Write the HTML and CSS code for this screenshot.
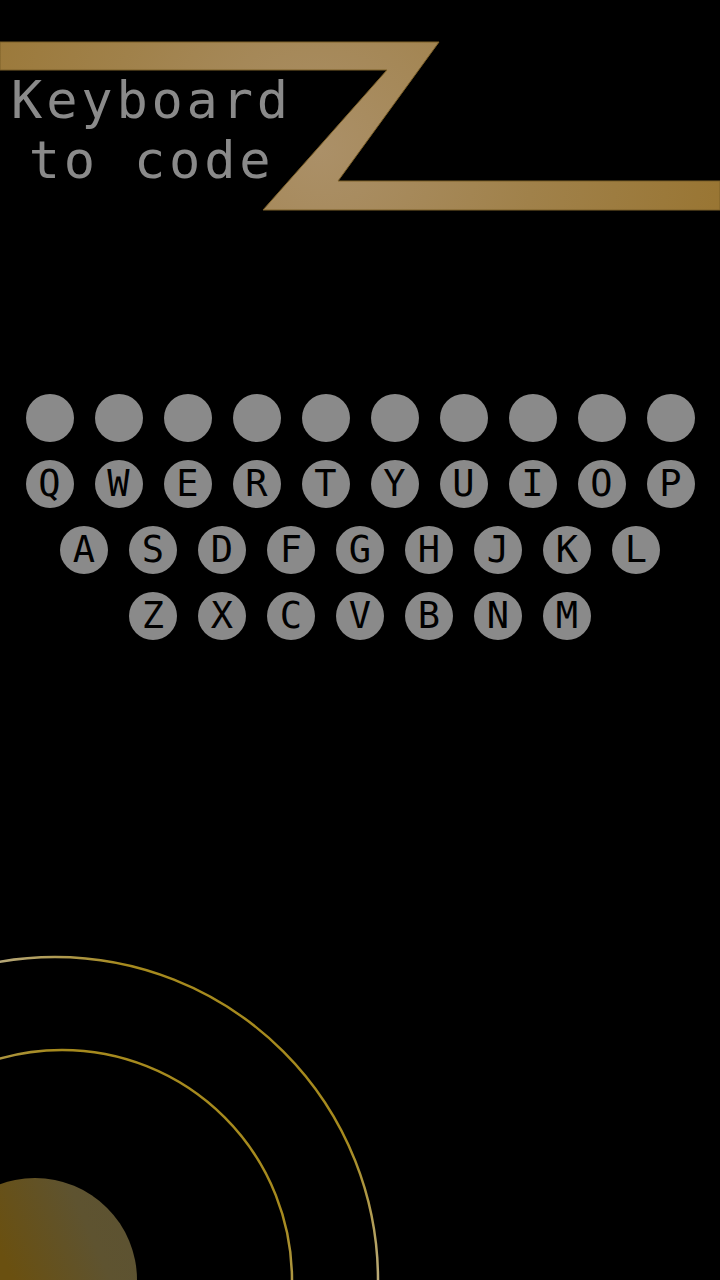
FILE: index.html
```html
<!DOCTYPE html>
<html lang="en">
<head>
<meta charset="utf-8">
<title>Keyboard to code</title>
<link rel="stylesheet" href="styles.css">
</head>
<body>
<div class="page">
  <header class="header">
    <svg class="zmark" width="720" height="220" viewBox="0 0 720 220" aria-hidden="true">
      <defs>
        <radialGradient id="zg" gradientUnits="userSpaceOnUse" cx="320" cy="150" r="430">
          <stop offset="0" stop-color="#ab9068"/>
          <stop offset="0.5" stop-color="#a0814a"/>
          <stop offset="1" stop-color="#987430"/>
        </radialGradient>
      </defs>
      <polygon points="0,42 439,42 338,181 720,181 720,210 263,210 387,70 0,70" fill="url(#zg)" stroke="#7d6028" stroke-width="1"/>
    </svg>
    <h1 class="title"><span>Keyboard</span><span>to code</span></h1>
  </header>

  <main class="keyboard">
    <div class="row">
      <div class="key"></div><div class="key"></div><div class="key"></div><div class="key"></div><div class="key"></div>
      <div class="key"></div><div class="key"></div><div class="key"></div><div class="key"></div><div class="key"></div>
    </div>
    <div class="row">
      <div class="key">Q</div><div class="key">W</div><div class="key">E</div><div class="key">R</div><div class="key">T</div>
      <div class="key">Y</div><div class="key">U</div><div class="key">I</div><div class="key">O</div><div class="key">P</div>
    </div>
    <div class="row">
      <div class="key">A</div><div class="key">S</div><div class="key">D</div><div class="key">F</div><div class="key">G</div>
      <div class="key">H</div><div class="key">J</div><div class="key">K</div><div class="key">L</div>
    </div>
    <div class="row">
      <div class="key">Z</div><div class="key">X</div><div class="key">C</div><div class="key">V</div><div class="key">B</div>
      <div class="key">N</div><div class="key">M</div>
    </div>
  </main>

  <svg class="rings" width="400" height="330" viewBox="0 0 400 330" aria-hidden="true">
    <defs>
      <linearGradient id="rg" gradientUnits="userSpaceOnUse" x1="0" y1="0" x2="400" y2="330">
        <stop offset="0" stop-color="#b8aa80"/>
        <stop offset="0.2" stop-color="#a68a1e"/>
        <stop offset="0.75" stop-color="#a68a1e"/>
        <stop offset="1" stop-color="#bcae84"/>
      </linearGradient>
      <linearGradient id="dg" gradientUnits="userSpaceOnUse" x1="0" y1="300" x2="137" y2="240">
        <stop offset="0" stop-color="#6a5010"/>
        <stop offset="0.6" stop-color="#5e5330"/>
        <stop offset="1" stop-color="#5c5232"/>
      </linearGradient>
    </defs>
    <circle cx="55" cy="330" r="323" fill="none" stroke="url(#rg)" stroke-width="2.5"/>
    <circle cx="62" cy="330" r="230" fill="none" stroke="url(#rg)" stroke-width="2.5"/>
    <circle cx="35" cy="330" r="102" fill="url(#dg)"/>
  </svg>
</div>
</body>
</html>
```

FILE: styles.css
```css
* { box-sizing: border-box; }

html, body {
  margin: 0;
  padding: 0;
  background: #000;
}

.page {
  width: 720px;
  height: 1280px;
  display: flex;
  flex-direction: column;
  overflow: hidden;
  background: #000;
}

.header {
  position: relative;
  height: 220px;
  flex: none;
}

.zmark {
  position: absolute;
  top: 0;
  left: 0;
  display: block;
}

.title {
  position: relative;
  margin: 0;
  padding-top: 70px;
  padding-left: 6px;
  width: 297px;
  display: flex;
  flex-direction: column;
  align-items: center;
  font-family: "DejaVu Sans Mono", "Liberation Mono", monospace;
  font-weight: normal;
  font-size: 52px;
  line-height: 60px;
  letter-spacing: 3.8px;
  color: #8a8a8a;
}

.keyboard {
  margin-top: 174px;
  display: flex;
  flex-direction: column;
  gap: 18px;
}

.row {
  display: flex;
  justify-content: center;
  gap: 21px;
}

.key {
  width: 48px;
  height: 48px;
  border-radius: 50%;
  background: #8a8a8a;
  color: #000;
  font-family: "DejaVu Sans Mono", "Liberation Mono", monospace;
  font-size: 37px;
  line-height: 48px;
  text-align: center;
}

.rings {
  margin-top: auto;
  display: block;
  flex: none;
}
```
